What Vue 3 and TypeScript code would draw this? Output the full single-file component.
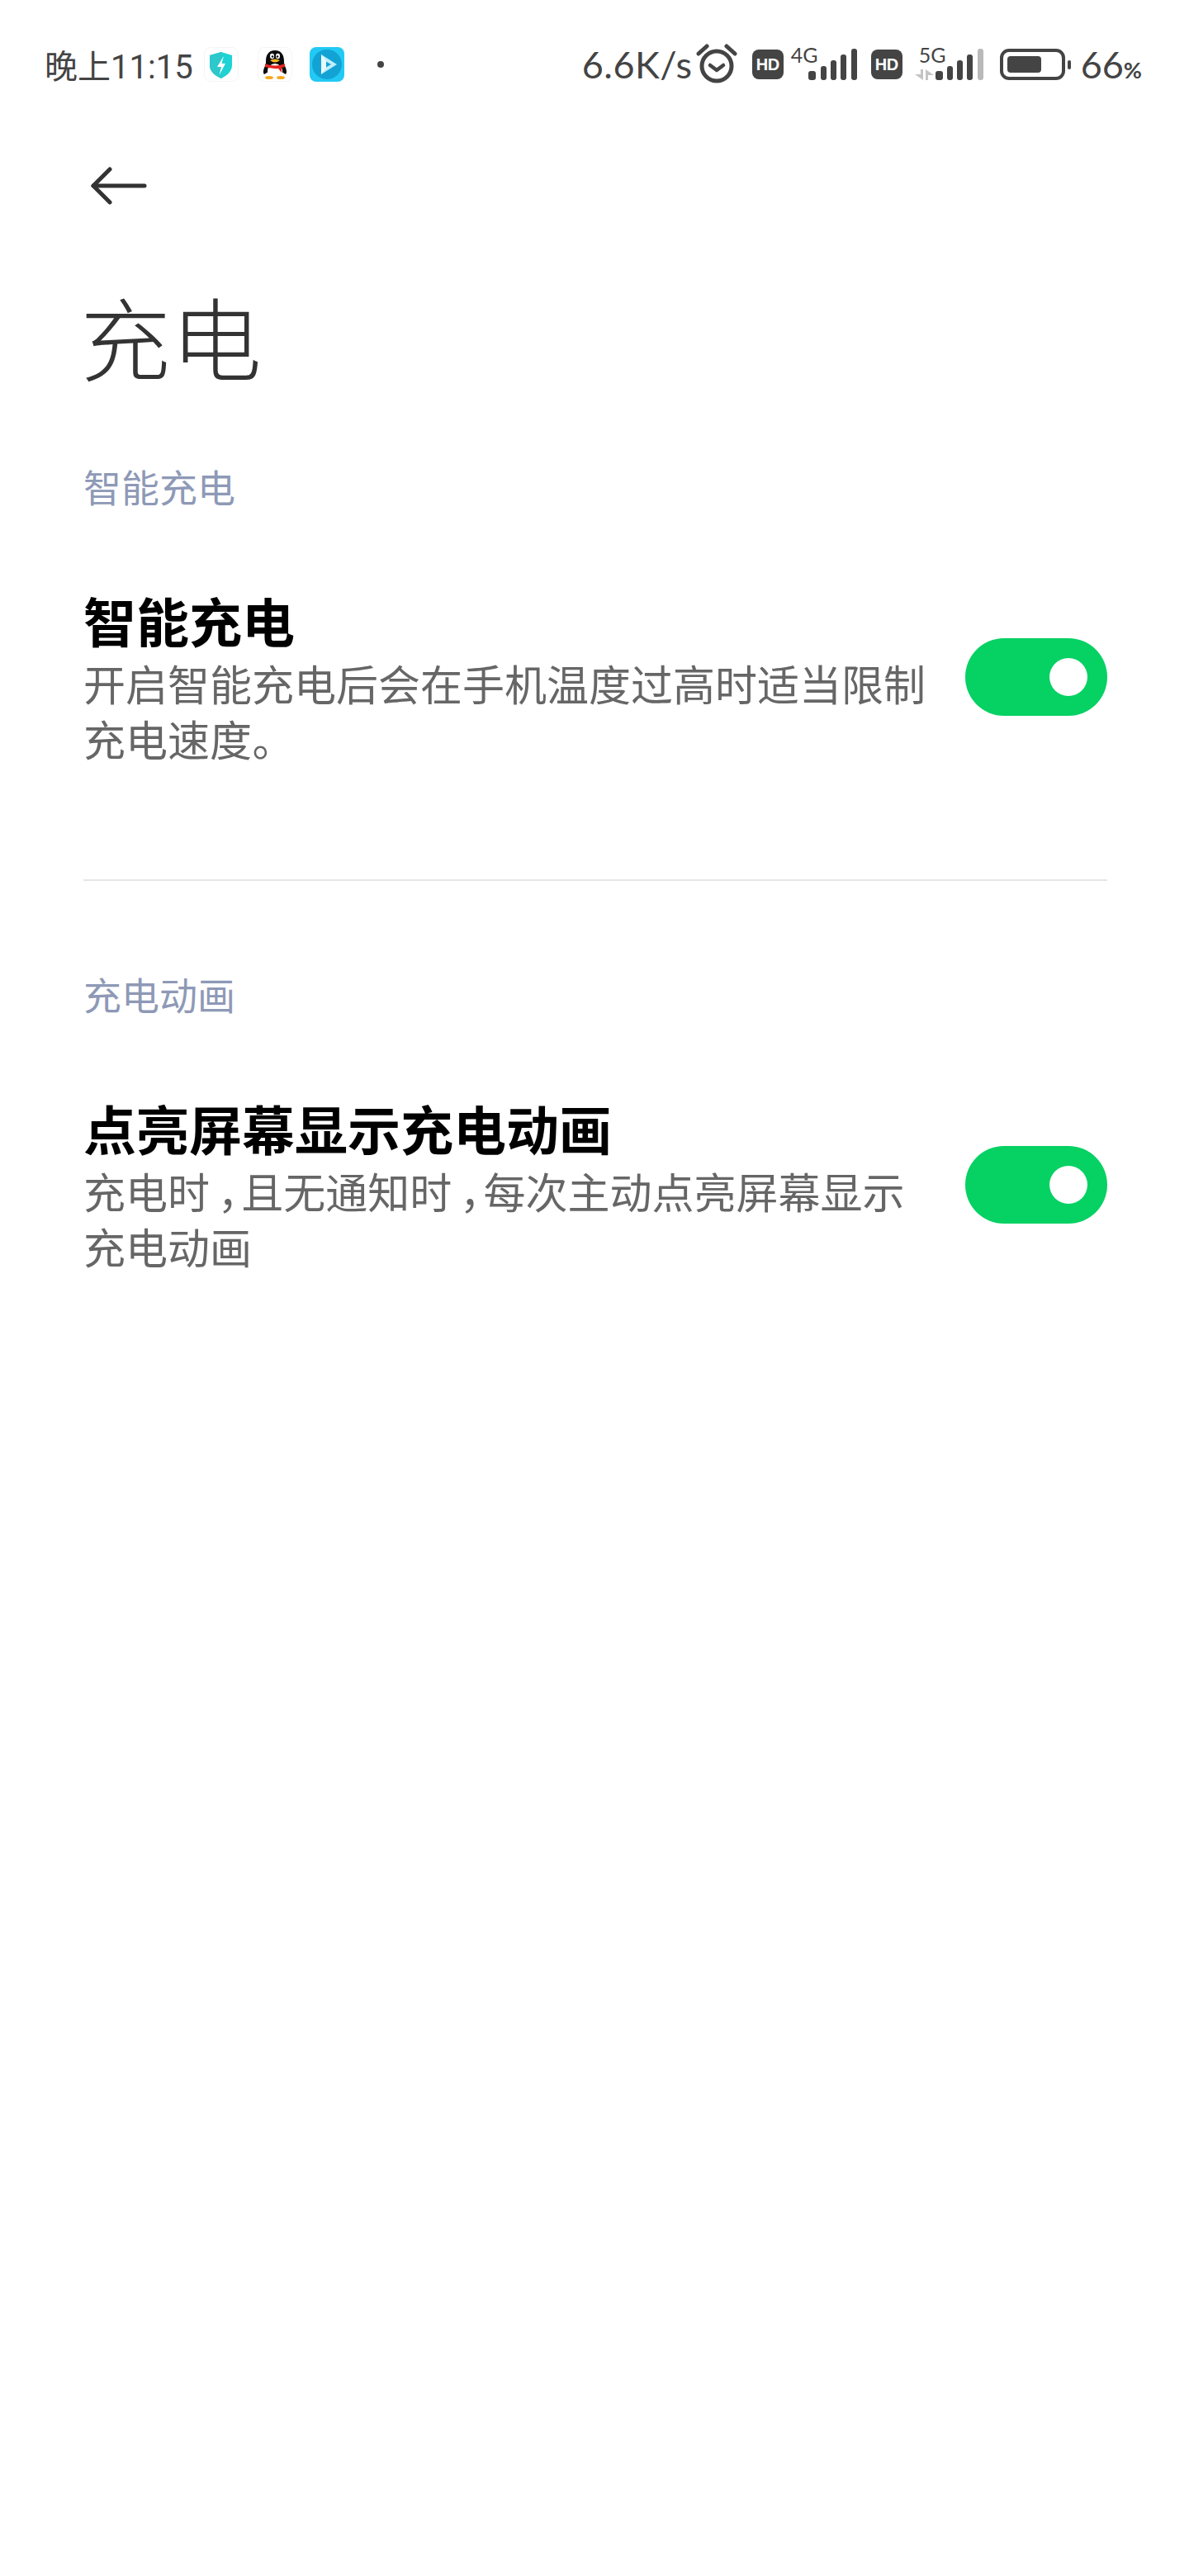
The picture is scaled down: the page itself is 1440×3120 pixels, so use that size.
<script setup lang="ts">
interface Section {
  label: string
  title: string
  desc: string
}

const sections: Section[] = [
  {
    label: '智能充电',
    title: '智能充电',
    desc: '开启智能充电后会在手机温度过高时适当限制充电速度。',
  },
  {
    label: '充电动画',
    title: '点亮屏幕显示充电动画',
    desc: '充电时\u2005，且无通知时\u2005，每次主动点亮屏幕显示充电动画',
  },
]

const bars = [
  { x: 0, h: 11, w: 9 },
  { x: 15, h: 17, w: 7 },
  { x: 27, h: 24, w: 7 },
  { x: 39, h: 31, w: 7 },
  { x: 52, h: 38, w: 7 },
]
</script>

<template>
  <div class="page">
    <div class="status">
      <div class="status-left">
        <span class="time">晚上11:15</span>
        <svg class="app-icon" viewBox="0 0 42 42">
          <rect x="0.5" y="0.5" width="41" height="41" rx="8" fill="#fff" stroke="#f4f4f4" />
          <path d="M7 10 L21 6 L34 10 L34 22 C34 30 27 35 21 38 C14 35 7 30 7 22 Z" fill="#1fd2d4" />
          <path d="M7 10 L21 6 L21 38 C14 35 7 30 7 22 Z" fill="#2cc8cc" />
          <path d="M24 11 L16 24 L21 24 L18.5 34 L26 20 L21.5 20 Z" fill="#fff" />
        </svg>
        <svg class="app-icon qq" viewBox="0 0 42 42">
          <rect x="0.5" y="0.5" width="41" height="41" rx="8" fill="#fff" stroke="#f4f4f4" />
          <path d="M21 4 C13 4 10 10 10 17 L10 21 C7 26 6 31 8 33 L13 30 C14 33 16 35 17 36 L25 36 C27 35 29 33 29 30 L34 33 C36 31 35 26 32 21 L32 17 C32 10 29 4 21 4 Z" fill="#0c0c0c" />
          <ellipse cx="21" cy="29" rx="9" ry="9" fill="#fff" />
          <ellipse cx="17.5" cy="11" rx="2.5" ry="3.2" fill="#fff" />
          <ellipse cx="24.5" cy="11" rx="2.5" ry="3.2" fill="#fff" />
          <circle cx="18" cy="11.5" r="1.2" fill="#000" />
          <circle cx="24" cy="11.5" r="1.2" fill="#000" />
          <path d="M15 16 Q21 13 27 16 Q21 21 15 16 Z" fill="#f5b51f" />
          <path d="M9 20 Q21 25 33 20 L33 24 L29 25 L29 31 L25 26 Q21 26.500 13 25 L9 24 Z" fill="#e3231f" />
          <ellipse cx="14" cy="37" rx="5" ry="2" fill="#f5a91f" />
          <ellipse cx="28" cy="37" rx="5" ry="2" fill="#f5a91f" />
        </svg>
        <svg class="app-icon" viewBox="0 0 42 42">
          <rect width="42" height="42" rx="8" fill="#22c9f4" />
          <circle cx="21" cy="21" r="18" fill="#12a3d4" />
          <path d="M14 9 L33 21 L14 33 Z" fill="#bfeefb" />
          <path d="M19 17 L26 21 L19 25 Z" fill="#12a3d4" />
          <path d="M14 9 L20 17 L20 25 L14 33 Z" fill="#e8fbff" />
        </svg>
        <span class="dot"></span>
      </div>

      <div class="status-right">
        <span class="speed">6.6K/s</span>
        <svg class="alarm" viewBox="0 0 52 48" fill="none" stroke="#444" stroke-linecap="round">
          <circle cx="26" cy="27" r="18" stroke-width="5" />
          <path d="M18 26 L26 32 L34 26" stroke-width="4.500" stroke-linejoin="round" />
          <path d="M4 12 L14 3" stroke-width="5" />
          <path d="M48 12 L38 3" stroke-width="5" />
        </svg>
        <span class="hd">HD</span>
        <div class="signal">
          <span class="net">4G</span>
          <svg width="60" height="38" viewBox="0 0 60 38">
            <rect v-for="b in bars" :key="b.x" :x="b.x" :y="38 - b.h" :width="b.w" :height="b.h" rx="3" fill="#444" />
          </svg>
        </div>
        <span class="hd hd-second">HD</span>
        <div class="signal signal-second">
          <span class="net">5G</span>
          <svg width="84" height="38" viewBox="0 0 84 38">
            <path d="M7 25 L10 25 L10 38 L0 31 L7 31 Z" fill="#c4c4c4" />
            <path d="M13 25 L23 32 L16 32 L16 38 L13 38 Z" fill="#c4c4c4" />
            <rect x="25" y="27" width="9" height="11" rx="3" fill="#444" />
            <rect x="39" y="21" width="7" height="17" rx="3" fill="#444" />
            <rect x="51" y="14" width="7" height="24" rx="3" fill="#444" />
            <rect x="63" y="7" width="7" height="31" rx="3" fill="#444" />
            <rect x="76" y="0" width="7" height="38" rx="3" fill="#b9b9b9" />
          </svg>
        </div>
        <div class="battery">
          <div class="battery-body"><div class="battery-fill"></div></div>
          <span class="battery-nub"></span>
        </div>
        <span class="pct">66<small>%</small></span>
      </div>
    </div>

    <div class="nav">
      <svg class="back" viewBox="0 0 68 46" fill="none" stroke="#333" stroke-width="5" stroke-linecap="round" stroke-linejoin="round">
        <path d="M23 3 L3 23 L23 43" />
        <path d="M3 23 L65 23" />
      </svg>
    </div>

    <h1 class="heading">充电</h1>

    <template v-for="(s, i) in sections" :key="s.label">
      <div v-if="i > 0" class="divider"></div>
      <section class="section">
        <div class="label">{{ s.label }}</div>
        <div class="row">
          <div class="text">
            <div class="title">{{ s.title }}</div>
            <div class="desc">{{ s.desc }}</div>
          </div>
          <div class="toggle"><span class="knob"></span></div>
        </div>
      </section>
    </template>
  </div>
</template>

<style scoped>
.page {
  width: 1440px;
  height: 3120px;
  background: #fff;
  font-family: "Noto Sans CJK SC", "Noto Sans", sans-serif;
  overflow: hidden;
  display: flex;
  flex-direction: column;
}
.status {
  height: 156px;
  flex: none;
  padding: 0 57px 0 54px;
  box-sizing: border-box;
  display: flex;
  align-items: center;
  justify-content: space-between;
  color: #444;
}
.status-left,
.status-right {
  display: flex;
  align-items: center;
}
.time {
  font-family: Roboto, "Noto Sans CJK SC", sans-serif;
  font-size: 40px;
  width: 193px;
  white-space: nowrap;
}
.app-icon {
  width: 42px;
  height: 42px;
  margin-right: 23px;
  flex: none;
}
.app-icon.qq {
  margin-right: 21px;
}
.dot {
  width: 8px;
  height: 8px;
  border-radius: 50%;
  background: #444;
  margin-left: 17px;
}
.speed {
  font-family: Lato, sans-serif;
  font-size: 45px;
  width: 137px;
  white-space: nowrap;
  letter-spacing: 0.5px;
}
.alarm {
  width: 52px;
  height: 48px;
  margin-right: 17px;
  margin-top: -2px;
}
.hd {
  width: 38px;
  height: 36px;
  border-radius: 8px;
  background: #444;
  color: #fff;
  font-family: "Liberation Sans", sans-serif;
  font-weight: 700;
  font-size: 20px;
  line-height: 36px;
  text-align: center;
  letter-spacing: -0.5px;
}
.hd-second {
  margin-left: 16px;
}
.signal {
  position: relative;
  height: 38px;
  margin-left: 30px;
}
.signal svg {
  display: block;
}
.signal-second {
  margin-left: 15px;
}
.net {
  position: absolute;
  top: -4px;
  left: -21px;
  font-family: Lato, sans-serif;
  font-size: 25px;
  line-height: 22px;
}
.signal-second .net {
  left: 5px;
}
.battery {
  display: flex;
  align-items: center;
  margin-left: 19px;
}
.battery-body {
  width: 79px;
  height: 38px;
  box-sizing: border-box;
  border: 4px solid #444;
  border-radius: 11px;
  padding: 5px;
}
.battery-fill {
  width: 41px;
  height: 20px;
  border-radius: 4px;
  background: #444;
}
.battery-nub {
  width: 4px;
  height: 11px;
  border-radius: 2px;
  background: #444;
  margin-left: 3px;
}
.pct {
  font-family: Lato, sans-serif;
  font-size: 45px;
  margin-left: 12px;
  white-space: nowrap;
}
.pct small {
  font-size: 27px;
  font-weight: 700;
}
.nav {
  height: 138px;
  flex: none;
  padding-left: 110px;
  display: flex;
  align-items: center;
}
.back {
  width: 68px;
  height: 46px;
}
.heading {
  margin: 37px 0 -1px 97px;
  font-size: 110px;
  line-height: 150px;
  font-weight: 300;
  color: #333;
}
.section {
  padding: 0 99px 0 101px;
}
.label {
  margin-top: 78px;
  font-size: 46px;
  line-height: 60px;
  color: #8e99b6;
}
.row {
  margin-top: 89px;
  display: flex;
  align-items: center;
  justify-content: space-between;
}
.text {
  width: 1030px;
}
.title {
  font-size: 64px;
  font-weight: 700;
  line-height: 87px;
  color: #000;
}
.desc {
  font-size: 51px;
  line-height: 67px;
  color: #666;
  font-feature-settings: "palt";
}
.toggle {
  width: 172px;
  height: 94px;
  margin-top: 5px;
  border-radius: 47px;
  background: #06d163;
  display: flex;
  align-items: center;
  justify-content: flex-end;
  padding-right: 24px;
  box-sizing: border-box;
  flex: none;
}
.knob {
  width: 46px;
  height: 46px;
  border-radius: 50%;
  background: #fff;
}
.divider {
  height: 2px;
  flex: none;
  background: #e6e6e6;
  margin: 137px 99px 28px 101px;
}
</style>
